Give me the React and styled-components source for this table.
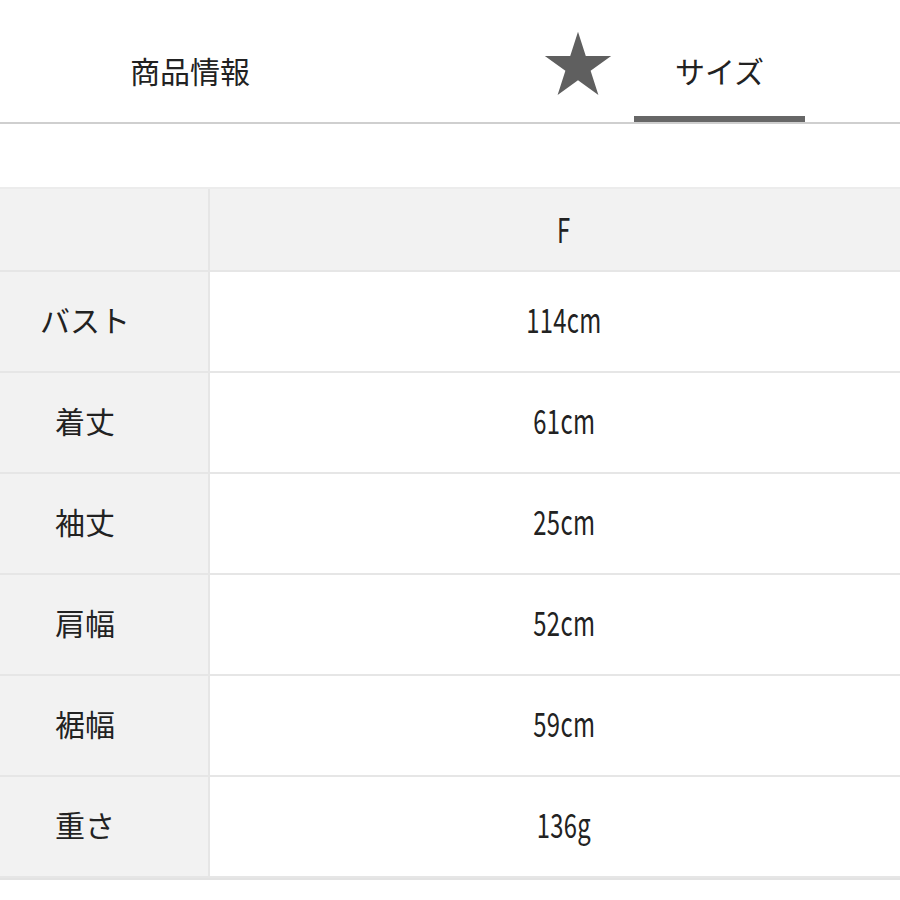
import styled, { createGlobalStyle } from "styled-components";

const GlobalStyle = createGlobalStyle`
  body {
    margin: 0;
    background: #fff;
    font-family: "Noto Sans CJK JP", "Noto Sans", sans-serif;
    color: #222;
  }
`;

const rows = [
  { label: "バスト", value: "114cm" },
  { label: "着丈", value: "61cm" },
  { label: "袖丈", value: "25cm" },
  { label: "肩幅", value: "52cm" },
  { label: "裾幅", value: "59cm" },
  { label: "重さ", value: "136g" },
];

export default function App() {
  return (
    <Page>
      <GlobalStyle />
      <Tabs>
        <Tab width={380}>商品情報</Tab>
        <StarBox>
          <svg width="68" height="68" viewBox="0 0 24 24">
            <path
              d="M12 0.3 L14.75 8.8 L23.7 8.8 L16.45 14.05 L19.2 22.6 L12 17.35 L4.8 22.6 L7.55 14.05 L0.3 8.8 L9.25 8.8 Z"
              fill="#5f5f5f"
            />
          </svg>
        </StarBox>
        <Tab width={171} active>
          サイズ
        </Tab>
      </Tabs>

      <Table>
        <HeadCell side />
        <HeadCell>
          <Num>F</Num>
        </HeadCell>
        {rows.map((row) => (
          <Row key={row.label}>
            <LabelCell>{row.label}</LabelCell>
            <ValueCell>
              <Num>{row.value}</Num>
            </ValueCell>
          </Row>
        ))}
      </Table>
    </Page>
  );
}

const Page = styled.div`
  width: 900px;
  height: 900px;
  overflow: hidden;
`;

const Tabs = styled.div`
  display: flex;
  height: 122px;
  border-bottom: 2px solid #cfcfcf;
`;

const Tab = styled.div`
  width: ${(p) => p.width}px;
  display: flex;
  align-items: center;
  justify-content: center;
  font-size: 30px;
  color: #222;
  box-sizing: border-box;
  padding-top: ${(p) => (p.active ? "24px" : "18px")};
  border-bottom: ${(p) => (p.active ? "6px solid #676767" : "none")};
`;

const StarBox = styled.div`
  width: 254px;
  display: flex;
  align-items: flex-start;
  justify-content: flex-end;
  padding-top: 31px;
  padding-right: 22px;
  box-sizing: border-box;
`;

const Table = styled.div`
  margin-top: 63px;
  margin-left: -38px;
  width: 956px;
  display: grid;
  grid-template-columns: 246px 1fr;
  border-top: 2px solid #ececec;
  border-bottom: 2px solid #e3e3e3;
`;

const Row = styled.div`
  display: contents;
`;

const HeadCell = styled.div`
  height: 83px;
  box-sizing: border-box;
  padding-bottom: 3px;
  background: #f2f2f2;
  border-left: ${(p) => (p.side ? "none" : "2px solid #e6e6e6")};
  border-bottom: 2px solid #e6e6e6;
  display: flex;
  align-items: center;
  justify-content: center;
`;

const LabelCell = styled.div`
  height: 101px;
  box-sizing: border-box;
  padding-bottom: 6px;
  background: #f2f2f2;
  border-bottom: 2px solid #e6e6e6;
  display: flex;
  align-items: center;
  justify-content: center;
  font-size: 30px;
  color: #222;
`;

const ValueCell = styled.div`
  height: 101px;
  box-sizing: border-box;
  padding-bottom: 6px;
  background: #fff;
  border-left: 2px solid #e6e6e6;
  border-bottom: 2px solid #e6e6e6;
  display: flex;
  align-items: center;
  justify-content: center;
`;

const Num = styled.span`
  display: inline-block;
  font-size: 34px;
  font-weight: 400;
  color: #222;
  transform: scaleX(0.7);
  letter-spacing: 0.5px;
`;
